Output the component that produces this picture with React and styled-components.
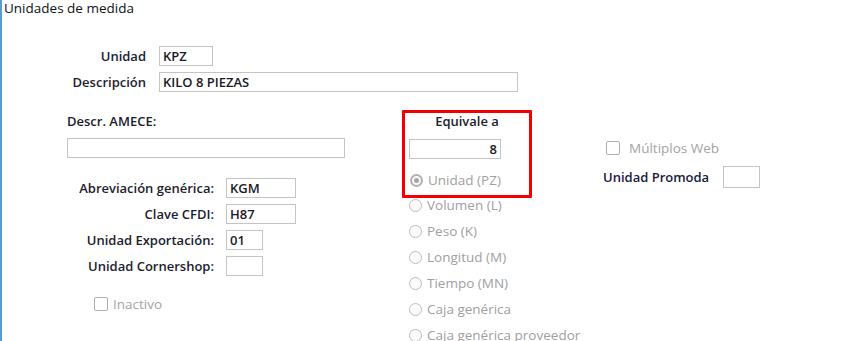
import React from 'react';
import styled, { createGlobalStyle } from 'styled-components';

const Global = createGlobalStyle`
  html, body { margin: 0; padding: 0; background: #fff; }
  body { font-family: "Open Sans", "Noto Sans", sans-serif; font-size: 13.5px; color: #1f1f2c; }
  * { box-sizing: border-box; }
`;

const Window = styled.div`
  width: 865px;
  height: 341px;
  overflow: hidden;
  border-left: 2px solid #5b9bd5;
  background: #fff;
`;

const Title = styled.div`
  padding-left: 2px;
  height: 16px;
  line-height: 16px;
  font-size: 13.5px;
  color: #111;
`;

const TopGrid = styled.div`
  display: grid;
  grid-template-columns: 144px auto;
  column-gap: 13px;
  row-gap: 6px;
  margin-top: 30px;
  align-items: center;
  justify-items: start;
`;

const Label = styled.label`
  justify-self: end;
  text-align: right;
  line-height: 16px;
  font-size: 13px;
  font-weight: 600;
  color: #1c1c2e;
  white-space: nowrap;
`;

const Field = styled.input`
  display: block;
  width: ${p => p.$w}px;
  height: 20px;
  border: 1px solid #c4c4c4;
  padding: 0 3px;
  font-family: inherit;
  font-size: 13px;
  font-weight: 600;
  color: #1a1a26;
  background: #fff;
  outline: none;
  text-align: ${p => (p.$right ? 'right' : 'left')};
`;

const Main = styled.div`
  display: flex;
  align-items: flex-start;
  margin-top: 18px;
`;

const LeftCol = styled.div`
  width: 400px;
  padding-left: 65px;
  display: flex;
  flex-direction: column;
`;

const PlainLabel = styled.div`
  line-height: 16px;
  font-size: 13px;
  font-weight: 600;
  color: #1c1c2e;
  margin-top: ${p => p.$mt || 0}px;
`;

const Spaced = styled.div`
  margin-top: ${p => p.$mt || 0}px;
  margin-left: ${p => p.$ml || 0}px;
`;

const FieldGrid = styled.div`
  display: grid;
  grid-template-columns: 147px auto;
  column-gap: 12px;
  row-gap: 6px;
  margin-top: 20px;
  align-items: center;
  justify-items: start;
`;

const CheckRow = styled.div`
  display: flex;
  align-items: center;
  gap: ${p => p.$gap || 5}px;
  margin-top: ${p => p.$mt || 0}px;
  margin-left: ${p => p.$ml || 0}px;
  line-height: 16px;
  color: #a3a3a3;
  font-size: 13.5px;
`;

const Box = styled.span`
  width: 14px;
  height: 14px;
  border: 1.5px solid #aeaeae;
  border-radius: 2px;
  background: #fff;
  flex: none;
`;

const MiddleCol = styled.div`
  width: 130px;
  display: flex;
  flex-direction: column;
`;

const RedBox = styled.div`
  border: 3px solid #f20000;
  border-radius: 1px;
  padding: 0 0 8px 0;
  display: flex;
  flex-direction: column;
`;

const BoxTitle = styled.div`
  text-align: center;
  line-height: 16px;
  font-weight: 600;
  font-size: 13px;
  color: #1c1c2e;
`;

const RadioRow = styled.div`
  display: flex;
  align-items: center;
  gap: 5px;
  height: 14px;
  line-height: 14px;
  color: #a0a0a0;
  font-size: 13.5px;
  white-space: nowrap;
  margin-top: ${p => p.$mt || 0}px;
  margin-left: ${p => p.$ml || 0}px;
`;

const Radio = styled.span`
  width: 13px;
  height: 13px;
  border-radius: 50%;
  border: ${p => (p.$checked ? '2px solid #b0b0b0' : '1px solid #bcbcbc')};
  background: #fbfbfb;
  display: flex;
  align-items: center;
  justify-content: center;
  flex: none;
  &::after {
    content: '';
    display: ${p => (p.$checked ? 'block' : 'none')};
    width: 5px;
    height: 5px;
    border-radius: 50%;
    background: #a6a6a6;
  }
`;

const RadioList = styled.div`
  display: flex;
  flex-direction: column;
  gap: 12px;
  padding-left: 7px;
`;

const RightCol = styled.div`
  margin-left: 71px;
  display: flex;
  flex-direction: column;
`;

const PromodaRow = styled.div`
  display: flex;
  align-items: center;
  margin-top: 10px;
`;

const PromodaLabel = styled.div`
  width: 120px;
  font-weight: 600;
  font-size: 13px;
  line-height: 16px;
  color: #1a1a3c;
`;

const Field2 = styled(Field)`
  height: 22px;
`;

const fields = [
  { label: 'Abreviación genérica:', value: 'KGM', w: 70 },
  { label: 'Clave CFDI:', value: 'H87', w: 70 },
  { label: 'Unidad Exportación:', value: '01', w: 37 },
  { label: 'Unidad Cornershop:', value: '', w: 37 },
];

const radios = [
  'Volumen (L)',
  'Peso (K)',
  'Longitud (M)',
  'Tiempo (MN)',
  'Caja genérica',
  'Caja genérica proveedor',
];

export default function App() {
  return (
    <>
      <Global />
      <Window>
        <Title>Unidades de medida</Title>
        <TopGrid>
          <Label>Unidad</Label>
          <Field $w={54} readOnly value="KPZ" />
          <Label>Descripción</Label>
          <Field $w={359} readOnly value="KILO 8 PIEZAS" />
        </TopGrid>
        <Main>
          <LeftCol>
            <PlainLabel $mt={3}>Descr. AMECE:</PlainLabel>
            <Spaced $mt={9}>
              <Field $w={278} readOnly value="" />
            </Spaced>
            <FieldGrid>
              {fields.map(f => (
                <React.Fragment key={f.label}>
                  <Label>{f.label}</Label>
                  <Field $w={f.w} readOnly value={f.value} />
                </React.Fragment>
              ))}
            </FieldGrid>
            <CheckRow $mt={20} $ml={27}>
              <Box />
              <span>Inactivo</span>
            </CheckRow>
          </LeftCol>
          <MiddleCol>
            <RedBox>
              <BoxTitle>Equivale a</BoxTitle>
              <Spaced $mt={10} $ml={4}>
                <Field $w={92} $right readOnly value="8" />
              </Spaced>
              <RadioRow $mt={14} $ml={5}>
                <Radio $checked />
                <span>Unidad (PZ)</span>
              </RadioRow>
            </RedBox>
            <RadioList>
              {radios.map(r => (
                <RadioRow key={r}>
                  <Radio />
                  <span>{r}</span>
                </RadioRow>
              ))}
            </RadioList>
          </MiddleCol>
          <RightCol>
            <CheckRow $mt={30} $ml={3} $gap={9}>
              <Box />
              <span>Múltiplos Web</span>
            </CheckRow>
            <PromodaRow>
              <PromodaLabel>Unidad Promoda</PromodaLabel>
              <Field2 $w={37} readOnly value="" />
            </PromodaRow>
          </RightCol>
        </Main>
      </Window>
    </>
  );
}
